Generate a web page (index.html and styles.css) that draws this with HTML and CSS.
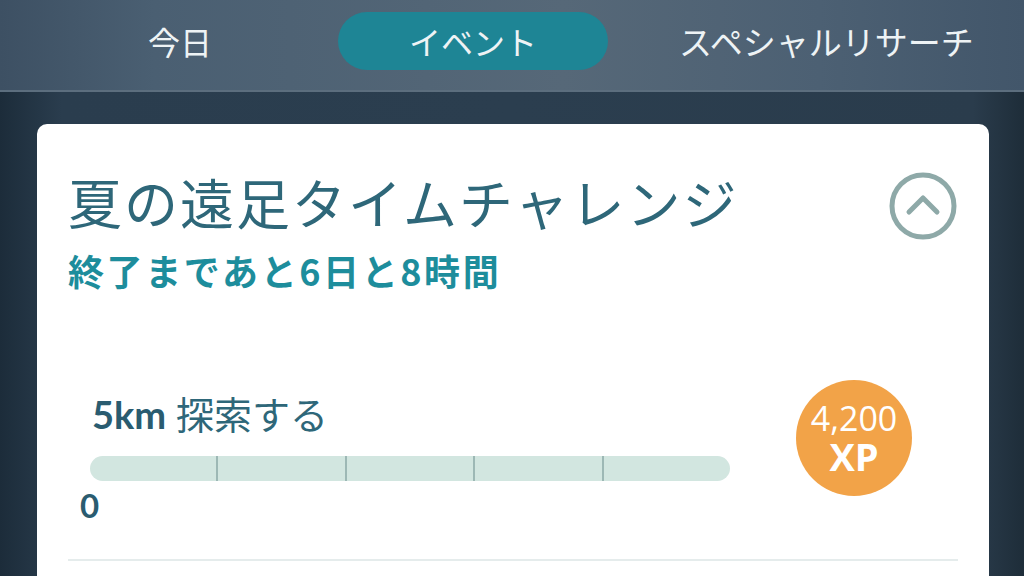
FILE: index.html
```html
<!DOCTYPE html>
<html lang="ja">
<head>
    <meta charset="UTF-8">
    <meta name="viewport" content="width=device-width, initial-scale=1.0">
    <title>イベント</title>
    <link rel="stylesheet" href="styles.css">
</head>
<body>

<nav class="tabs">
    <div class="tab tab-today">今日</div>
    <div class="tab tab-active">イベント</div>
    <div class="tab tab-special">スペシャルリサーチ</div>
</nav>

<main class="content">
    <section class="card">
        <div class="card-head">
            <div class="card-titles">
                <h1 class="card-title">夏の遠足タイムチャレンジ</h1>
                <p class="card-time">終了まであと6日と8時間</p>
            </div>
            <button class="collapse" aria-label="閉じる">
                <svg width="72" height="72" viewBox="0 0 72 72">
                    <circle cx="36" cy="36" r="31" fill="none" stroke="#8ea9a8" stroke-width="5"/>
                    <path d="M22 42 L36 28 L50 42" fill="none" stroke="#8ea9a8" stroke-width="5" stroke-linecap="round" stroke-linejoin="round"/>
                </svg>
            </button>
        </div>

        <div class="task">
            <div class="task-main">
                <div class="task-name"><b>5km</b> 探索する</div>
                <div class="progress">
                    <span></span><span></span><span></span><span></span><span></span>
                </div>
                <div class="progress-value">0</div>
            </div>
            <div class="reward">
                <span class="reward-num">4,200</span>
                <span class="reward-unit">XP</span>
            </div>
        </div>

        <hr class="divider">
    </section>
</main>

</body>
</html>
```

FILE: styles.css
```css
html, body {
    margin: 0;
    padding: 0;
    width: 1024px;
    height: 576px;
    overflow: hidden;
}

body {
    font-family: Lato, "Noto Sans CJK JP", sans-serif;
    background: linear-gradient(90deg, #1c2c3a 0%, #2a3d4e 6%, #2b3e4f 50%, #2a3c4c 95%, #1e2d39 100%);
}

.tabs {
    display: flex;
    align-items: center;
    height: 92px;
    padding-left: 148px;
    padding-bottom: 8px;
    box-sizing: border-box;
    background: linear-gradient(90deg, #3d5063 0%, #4a5f72 15%, #566878 55%, #4c6073 80%, #42566a 100%);
    border-bottom: 2px solid #5c6e7e;
}

.tab {
    font-family: "Noto Sans CJK JP", sans-serif;
    font-size: 32px;
    color: #eef3f5;
    line-height: 1;
}

.tab-active {
    margin-left: 126px;
    width: 270px;
    height: 58px;
    border-radius: 29px;
    background: #1e8595;
    display: flex;
    align-items: center;
    justify-content: center;
}

.tab-special {
    margin-left: 71px;
    font-size: 33px;
}

.content {
    padding: 32px 35px 0 37px;
}

.card {
    background: #fff;
    border-radius: 10px;
    padding: 46px 31px 0 31px;
    height: 480px;
    box-sizing: border-box;
}

.card-head {
    display: flex;
    justify-content: space-between;
    align-items: flex-start;
}

.card-title {
    margin: 0;
    font-family: "Noto Sans CJK JP", sans-serif;
    font-weight: 400;
    font-size: 54px;
    letter-spacing: 2px;
    line-height: 64px;
    color: #2e6779;
}

.card-time {
    margin: 16px 0 0;
    font-family: "Noto Sans CJK JP", sans-serif;
    font-weight: 700;
    font-size: 36px;
    letter-spacing: 2.6px;
    line-height: 40px;
    color: #1d8d9c;
}

.collapse {
    border: none;
    background: none;
    padding: 0;
    margin: 0 -1px 0 0;
    width: 72px;
    height: 72px;
}

.collapse svg {
    display: block;
}

.task {
    display: flex;
    justify-content: space-between;
    align-items: flex-start;
    margin-top: 104px;
    padding-left: 22px;
    padding-right: 46px;
}

.task-main {
    width: 640px;
}

.task-name {
    font-family: Lato, "Noto Sans CJK JP", sans-serif;
    font-size: 38px;
    line-height: 40px;
    color: #2e6779;
    padding-left: 2px;
}

.task-name b {
    font-weight: 700;
    color: #2a5c70;
}

.progress {
    display: flex;
    margin-top: 22px;
    height: 25px;
    border-radius: 13px;
    background: #d2e6e0;
    overflow: hidden;
}

.progress span {
    flex: 1;
    border-left: 2px solid #9db8b5;
}

.progress span:first-child {
    border-left: none;
}

.progress-value {
    margin: 6px 0 0 -10px;
    font-size: 33px;
    font-weight: 700;
    line-height: 36px;
    color: #2a5c70;
}

.reward {
    width: 116px;
    height: 116px;
    margin-top: -14px;
    border-radius: 50%;
    background: #f2a348;
    color: #fff;
    display: flex;
    flex-direction: column;
    align-items: center;
    justify-content: center;
    gap: 2px;
    font-family: "Open Sans", sans-serif;
}

.reward-num {
    font-size: 34px;
    line-height: 34px;
}

.reward-unit {
    font-size: 38px;
    font-weight: 700;
    line-height: 38px;
}

.divider {
    margin: 36px 0 0;
    border: none;
    border-top: 2px solid #e5ecec;
}
```
